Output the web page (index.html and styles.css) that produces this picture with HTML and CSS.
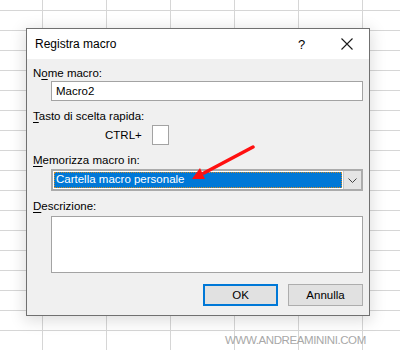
FILE: index.html
```html
<!DOCTYPE html>
<html lang="it">
<head>
<meta charset="utf-8">
<title>Registra macro</title>
<link rel="stylesheet" href="styles.css">
</head>
<body>
<div class="sheet">
  <div class="dialog">
    <div class="titlebar">
      <span class="title">Registra macro</span>
      <span class="help">?</span>
      <svg class="close" width="12" height="12" viewBox="0 0 12 12"><path d="M0.5 0.5 L11.5 11.5 M11.5 0.5 L0.5 11.5" stroke="#1a1a1a" stroke-width="1.1" fill="none"/></svg>
    </div>
    <div class="body">
      <div class="label">N<u>o</u>me macro:</div>
      <div class="field name">Macro2</div>
      <div class="label gap"><u>T</u>asto di scelta rapida:</div>
      <div class="shortcut"><span>CTRL+</span><span class="keybox"></span></div>
      <div class="label gap"><u>M</u>emorizza macro in:</div>
      <div class="combo">
        <div class="combo-value"><span class="sel">Cartella macro personale</span></div>
        <div class="combo-btn"><svg width="9" height="5" viewBox="0 0 9 5"><path d="M0.5 0.5 L4.5 4.5 L8.5 0.5" stroke="#444" stroke-width="1" fill="none"/></svg></div>
      </div>
      <div class="label gap"><u>D</u>escrizione:</div>
      <div class="field desc"></div>
      <div class="buttons">
        <div class="btn ok">OK</div>
        <div class="btn">Annulla</div>
      </div>
    </div>
    <svg class="arrow" width="70" height="40" viewBox="0 0 70 40">
      <line x1="61" y1="4" x2="12" y2="30" stroke="#ff1010" stroke-width="3.5" stroke-linecap="round"/>
      <polygon points="0,36 13,36 8,25" fill="#ff1010"/>
    </svg>
  </div>
  <div class="watermark">WWW.ANDREAMININI.COM</div>
</div>
</body>
</html>
```
FILE: styles.css
```css
html, body {
  margin: 0;
  padding: 0;
}
body {
  width: 400px;
  height: 350px;
  overflow: hidden;
  background-color: #ffffff;
  background-image:
    linear-gradient(to right, #d6d6d6 1px, transparent 1px),
    linear-gradient(to bottom, #d6d6d6 1px, transparent 1px);
  background-size: 64px 100%, 100% 20px;
  background-position: 42px 0, 0 10px;
  font-family: "Liberation Sans", Arial, sans-serif;
  font-size: 11.5px;
  color: #000;
}
.sheet {
  padding: 28px 0 0 26px;
}
.dialog {
  position: relative;
  width: 344px;
  height: 288px;
  box-sizing: border-box;
  border: 1px solid #707070;
  background: #f0f0f0;
  box-shadow: 0 3px 14px 2px rgba(0, 0, 0, 0.13);
}
.titlebar {
  height: 30px;
  background: #ffffff;
  display: flex;
  align-items: center;
  padding-left: 8px;
}
.title {
  font-size: 12px;
  flex: 1;
  padding-bottom: 1px;
}
.help {
  font-size: 13px;
  width: 12px;
  margin-right: 31px;
}
.close {
  margin-right: 16px;
}
.body {
  padding: 7px 6px 0 6px;
}
.label {
  line-height: 15px;
  height: 15px;
}
.label u {
  text-decoration: underline;
  text-underline-offset: 2px;
}
.gap {
  margin-top: 8px;
}
.field {
  margin-left: 18px;
  background: #fff;
  border: 1px solid #a3a3a3;
  box-sizing: border-box;
}
.name {
  height: 20px;
  line-height: 18px;
  padding-left: 4px;
}
.shortcut {
  display: flex;
  align-items: center;
  margin-top: 1px;
  margin-left: 72px;
  height: 20px;
}
.keybox {
  width: 17px;
  height: 20px;
  box-sizing: border-box;
  border: 1px solid #a3a3a3;
  background: #fff;
  margin-left: 10px;
}
.combo {
  margin-top: 1px;
  margin-left: 18px;
  height: 22px;
  box-sizing: border-box;
  border: 2px solid #ababab;
  background: #fff;
  display: flex;
}
.combo-value {
  flex: 1;
  padding: 1px;
  display: flex;
}
.sel {
  flex: 1;
  background: #0078d7;
  color: #fff;
  line-height: 14px;
  padding-left: 2px;
  outline: 1px dotted #c98a2a;
  outline-offset: -1px;
}
.combo-btn {
  width: 17px;
  background: #e5e5e5;
  border-left: 1px solid #c8c8c8;
  display: flex;
  align-items: center;
  justify-content: center;
}
.desc {
  margin-top: 2px;
  height: 57px;
}
.buttons {
  display: flex;
  justify-content: flex-end;
  gap: 10px;
  margin-top: 11px;
}
.btn {
  width: 75px;
  height: 22px;
  box-sizing: border-box;
  border: 1px solid #adadad;
  background: #e1e1e1;
  display: flex;
  align-items: center;
  justify-content: center;
}
.btn.ok {
  border: 2px solid #0078d7;
}
.arrow {
  position: absolute;
  left: 165px;
  top: 114px;
  filter: blur(0.4px);
}
.watermark {
  margin: 18px 0 0 199px;
  font-size: 11.5px;
  color: #a8a8a8;
  letter-spacing: -0.4px;
}
```
